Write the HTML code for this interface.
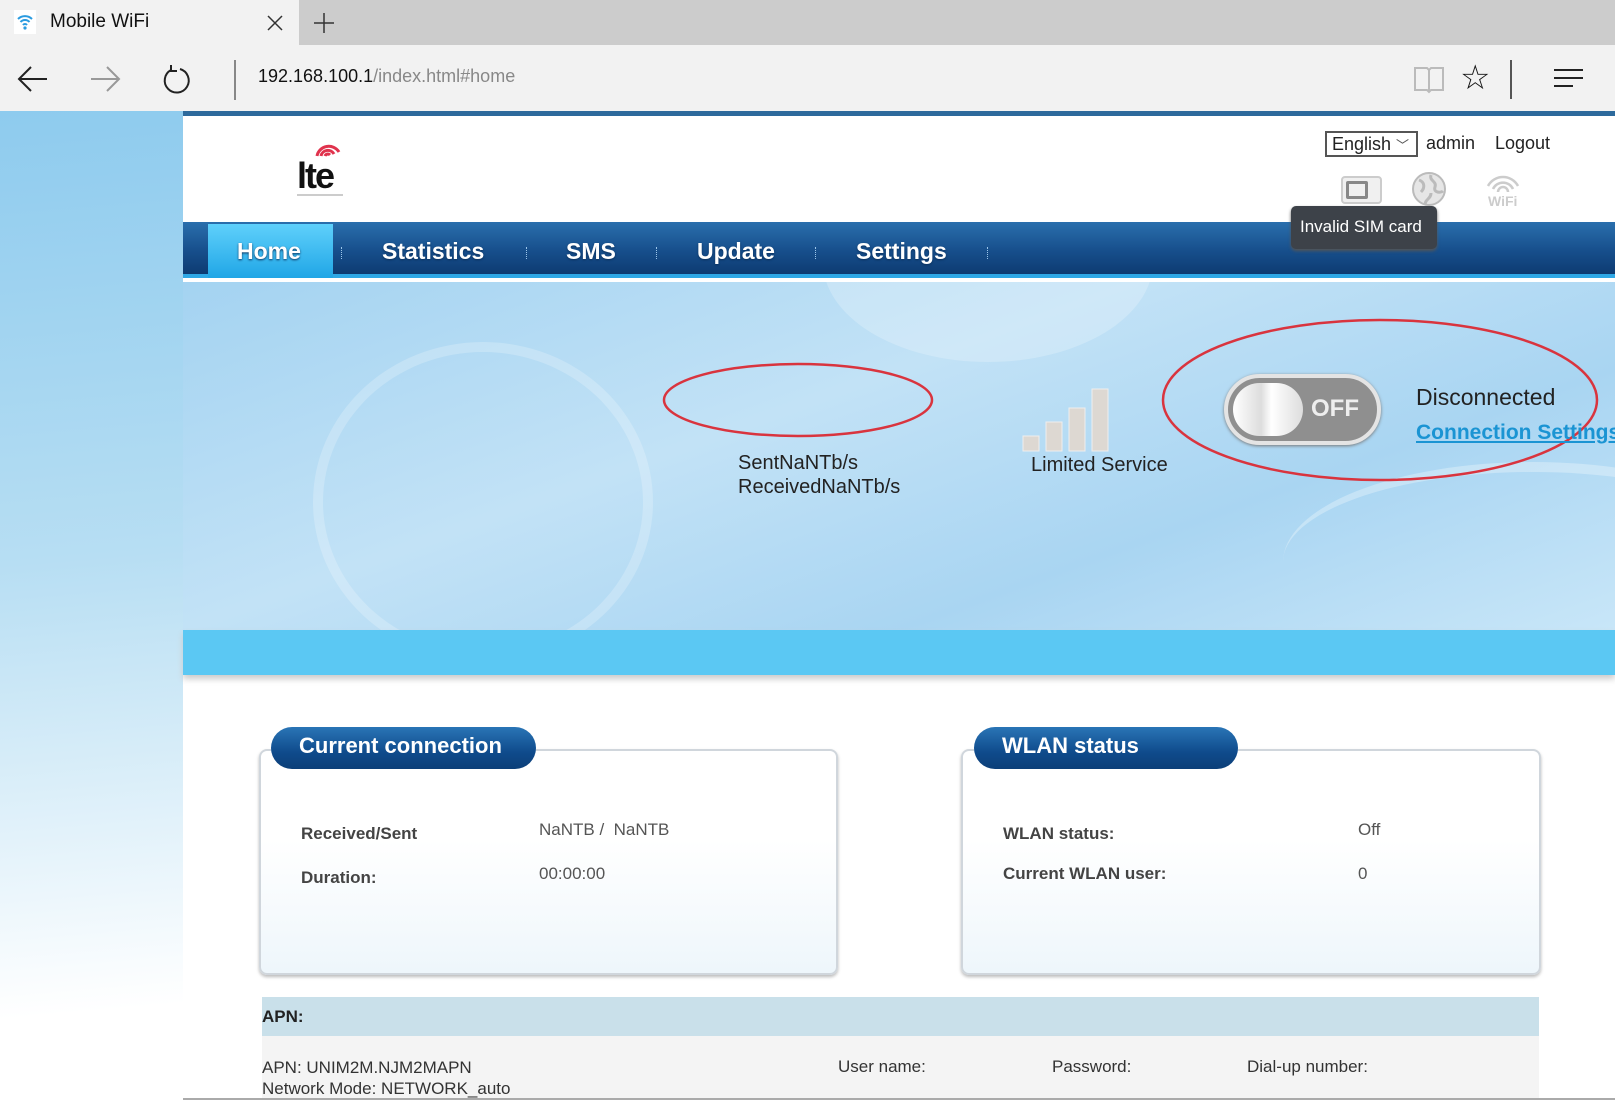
<!DOCTYPE html>
<html><head><meta charset="utf-8"><style>
*{margin:0;padding:0;box-sizing:border-box}
body{width:1615px;height:1105px;position:relative;overflow:hidden;background:#fff;font-family:"Liberation Sans",Arial,sans-serif}
.a{position:absolute}
.nav{font-size:23px;font-weight:bold;color:#fff;top:238px;text-shadow:0 1px 2px #0a2f5a}
.sep{top:247px;width:0;height:12px;border-left:1px dotted #9cc6ea}
.box{border:2px solid #d0d6dc;border-radius:8px;background:linear-gradient(#fff 40%,#eef6fb);box-shadow:0 2px 3px #bbb}
.pill{height:42px;border-radius:21px;background:linear-gradient(#2a75b6,#0f4b8c 60%,#0c3f78);color:#fff;font-weight:bold;font-size:22px;padding:6px 0 0 28px}
.lb{font-size:17px;font-weight:bold;color:#444}
.v{font-size:17px;color:#555}
.t{font-size:17px;color:#333}
</style></head><body>
<div class="a" style="left:0;top:0;width:1615px;height:45px;background:#cccccc"></div>
<div class="a" style="left:0;top:0;width:299px;height:45px;background:#f2f2f2"></div>
<svg class="a" style="left:14px;top:10px" width="22" height="24" viewBox="0 0 22 24"><rect width="22" height="24" fill="#fff"/><path d="M4 9a10 10 0 0 1 14 0M6.5 12a6 6 0 0 1 9 0M9 15a2.5 2.5 0 0 1 4 0" stroke="#2a9be0" stroke-width="2" fill="none"/><circle cx="11" cy="18" r="1.6" fill="#2a9be0"/></svg>
<div class="a" style="left:50px;top:11px;font-size:19px;color:#111">Mobile WiFi</div>
<svg class="a" style="left:266px;top:14px" width="18" height="18"><path d="M2 2L16 16M16 2L2 16" stroke="#333" stroke-width="1.5"/></svg>
<svg class="a" style="left:313px;top:12px" width="22" height="22"><path d="M11 1V21M1 11H21" stroke="#333" stroke-width="1.5"/></svg>
<div class="a" style="left:0;top:45px;width:1615px;height:66px;background:#f2f2f2"></div>
<svg class="a" style="left:16px;top:64px" width="34" height="30"><path d="M31 15H3M15 3L3 15L15 27" stroke="#222" stroke-width="2" fill="none"/></svg>
<svg class="a" style="left:88px;top:64px" width="34" height="30"><path d="M3 15H31M19 3L31 15L19 27" stroke="#999" stroke-width="2" fill="none"/></svg>
<svg class="a" style="left:161px;top:64px" width="32" height="32"><path d="M10 6A12 12 0 1 0 19 5" stroke="#222" stroke-width="2" fill="none"/><path d="M10 1V7H16" stroke="#222" stroke-width="2" fill="none"/></svg>
<div class="a" style="left:234px;top:60px;width:2px;height:40px;background:#888"></div>
<div class="a" style="left:258px;top:66px;font-size:18px;color:#111">192.168.100.1<span style="color:#888">/index.html#home</span></div>
<svg class="a" style="left:1413px;top:64px" width="32" height="30"><path d="M2 4H14L16 6L18 4H30V26H18L16 28L14 26H2ZM16 6V28" stroke="#bbb" stroke-width="2" fill="none"/></svg>
<div class="a" style="left:1460px;top:58px;font-size:34px;color:#111">☆</div>
<div class="a" style="left:1510px;top:60px;width:2px;height:39px;background:#555"></div>
<svg class="a" style="left:1553px;top:68px" width="32" height="20"><path d="M1 2H30M1 10H30M1 18H20" stroke="#222" stroke-width="2"/></svg>
<div class="a" style="left:0;top:111px;width:1615px;height:5px;background:#2d6a9c"></div>
<div class="a" style="left:0;top:111px;width:183px;height:994px;background:linear-gradient(175deg,#8ecbee,#b7def3 45%,#fff 90%)"></div>
<div class="a" style="left:183px;top:116px;width:1432px;height:106px;background:#fff"></div>
<svg class="a" style="left:295px;top:138px" width="60" height="62"><path d="M22 18a12 12 0 0 1 22 -4M26 18a7 7 0 0 1 13 -2M30 18a3 3 0 0 1 5 -1" stroke="#e0334d" stroke-width="3" fill="none"/><text x="2" y="50" font-family="Liberation Sans" font-weight="bold" font-size="36" fill="#111" letter-spacing="-2">lte</text><rect x="2" y="56" width="46" height="2" fill="#ccc"/></svg>
<div class="a" style="left:1325px;top:131px;width:93px;height:26px;border:2px solid #555;font-size:18px;padding:1px 0 0 5px;color:#222">English <span style="font-size:13px;color:#555">﹀</span></div>
<div class="a" style="left:1426px;top:133px;font-size:18px;color:#222">admin</div>
<div class="a" style="left:1495px;top:133px;font-size:18px;color:#222">Logout</div>
<div class="a" style="left:1341px;top:176px;width:41px;height:28px;border:2px solid #ccc;border-radius:4px;background:#f0f0f0"><div style="margin:3px 0 0 3px;width:22px;height:18px;border:3px solid #888;border-radius:2px"></div></div>
<svg class="a" style="left:1411px;top:171px" width="36" height="36"><circle cx="18" cy="18" r="16" fill="#e6e6e6" stroke="#bbb" stroke-width="2"/><path d="M8 9c6 2 6 8 2 12M20 4c-2 6 6 6 4 12s6 6 8 4M14 34c0-6 6-6 6-12" stroke="#bbb" stroke-width="3" fill="none"/></svg>
<svg class="a" style="left:1484px;top:170px" width="38" height="38"><path d="M4 16a17 17 0 0 1 30 0M9 19a11 11 0 0 1 20 0M14 22a5 5 0 0 1 10 0" stroke="#ccc" stroke-width="2.5" fill="none"/><text x="4" y="36" font-family="Liberation Sans" font-weight="bold" font-size="14" fill="#ccc">WiFi</text></svg>
<div class="a" style="left:183px;top:222px;width:1432px;height:56px;background:linear-gradient(#2a6fad,#174f8c 55%,#0d3b72);border-bottom:4px solid #2ea8e6"></div>
<div class="a" style="left:208px;top:224px;width:125px;height:54px;background:linear-gradient(#5fd0fb,#20a6e6)"></div>
<div class="a nav" style="left:237px">Home</div>
<div class="a sep" style="left:341px"></div>
<div class="a nav" style="left:382px">Statistics</div>
<div class="a sep" style="left:526px"></div>
<div class="a nav" style="left:566px">SMS</div>
<div class="a sep" style="left:656px"></div>
<div class="a nav" style="left:697px">Update</div>
<div class="a sep" style="left:815px"></div>
<div class="a nav" style="left:856px">Settings</div>
<div class="a sep" style="left:987px"></div>
<div class="a" style="left:1291px;top:206px;width:146px;height:43px;background:#3d4249;border-radius:5px;box-shadow:0 2px 3px #555;color:#fff;font-size:17px;padding:11px 0 0 9px">Invalid SIM card</div>
<div class="a" style="left:183px;top:282px;width:1432px;height:348px;background:linear-gradient(160deg,#a4d3f1,#c2e2f6 40%,#a9d5f2 70%,#c8e6f8);overflow:hidden">
 <div class="a" style="left:130px;top:60px;width:340px;height:320px;border-radius:50%;border:10px solid rgba(255,255,255,.22)"></div>
 <div class="a" style="left:640px;top:-120px;width:330px;height:200px;border-radius:50%;background:rgba(255,255,255,.22)"></div>
 <div class="a" style="left:1100px;top:180px;width:500px;height:200px;border-radius:50%;border-top:10px solid rgba(255,255,255,.3)"></div>
</div>
<div class="a" style="left:183px;top:630px;width:1432px;height:45px;background:#5bc8f3;box-shadow:0 4px 6px #ccc"></div>
<svg class="a" style="left:660px;top:361px" width="276" height="78"><ellipse cx="138" cy="39" rx="134" ry="36" fill="none" stroke="#d9343e" stroke-width="2.5"/></svg>
<div class="a" style="left:738px;top:451px;font-size:20px;color:#222;line-height:24px">SentNaNTb/s<br>ReceivedNaNTb/s</div>
<svg class="a" style="left:1022px;top:386px" width="92" height="66"><g fill="#ddd8d2" stroke="#eee"><rect x="1" y="50" width="16" height="15"/><rect x="24" y="36" width="16" height="29"/><rect x="47" y="22" width="16" height="43"/><rect x="70" y="3" width="16" height="62"/></g></svg>
<div class="a" style="left:1031px;top:454px;font-size:20px;color:#222">Limited Service</div>
<svg class="a" style="left:1160px;top:317px" width="455" height="168"><ellipse cx="220" cy="83" rx="217" ry="80" fill="none" stroke="#d9343e" stroke-width="2.5"/></svg>
<div class="a" style="left:1224px;top:374px;width:157px;height:71px;border-radius:36px;background:#8f8f8f;border:4px solid #e4e4e4;box-shadow:0 1px 3px #777"></div>
<div class="a" style="left:1233px;top:383px;width:70px;height:53px;border-radius:27px;background:linear-gradient(90deg,#fff,#ddd 40%,#fff 55%,#ddd)"></div>
<div class="a" style="left:1311px;top:395px;font-size:24px;font-weight:bold;color:#eee">OFF</div>
<div class="a" style="left:1416px;top:384px;font-size:23px;color:#222">Disconnected</div>
<div class="a" style="left:1416px;top:421px;font-size:21px;font-weight:bold;color:#1a94d3;text-decoration:underline;white-space:nowrap">Connection Settings</div>
<div class="a box" style="left:259px;top:749px;width:579px;height:226px"></div>
<div class="a pill" style="left:271px;top:727px;width:265px">Current connection</div>
<div class="a lb" style="left:301px;top:824px">Received/Sent</div>
<div class="a v" style="left:539px;top:820px">NaNTB /&nbsp; NaNTB</div>
<div class="a lb" style="left:301px;top:868px">Duration:</div>
<div class="a v" style="left:539px;top:864px">00:00:00</div>
<div class="a box" style="left:961px;top:749px;width:580px;height:226px"></div>
<div class="a pill" style="left:974px;top:727px;width:264px">WLAN status</div>
<div class="a lb" style="left:1003px;top:824px">WLAN status:</div>
<div class="a v" style="left:1358px;top:820px">Off</div>
<div class="a lb" style="left:1003px;top:864px">Current WLAN user:</div>
<div class="a v" style="left:1358px;top:864px">0</div>
<div class="a" style="left:262px;top:997px;width:1277px;height:39px;background:#c9e0ea"></div>
<div class="a lb" style="left:262px;top:1007px;color:#222">APN:</div>
<div class="a" style="left:262px;top:1036px;width:1277px;height:63px;background:#f4f4f4"></div>
<div class="a t" style="left:262px;top:1057px;line-height:21px">APN: UNIM2M.NJM2MAPN<br>Network Mode: NETWORK_auto</div>
<div class="a t" style="left:838px;top:1057px">User name:</div>
<div class="a t" style="left:1052px;top:1057px">Password:</div>
<div class="a t" style="left:1247px;top:1057px">Dial-up number:</div>
<div class="a" style="left:183px;top:1098px;width:1432px;height:2px;background:#aaa"></div>
</body></html>
